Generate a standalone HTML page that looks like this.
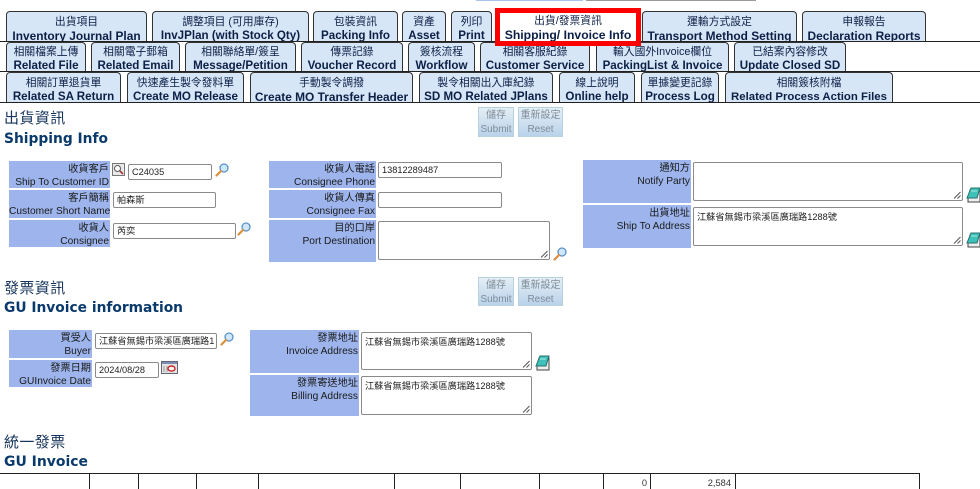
<!DOCTYPE html>
<html lang="zh-Hant"><head><meta charset="utf-8"><title>Shipping Info</title>
<style>
html,body{margin:0;padding:0;background:#fff;width:980px;height:489px;overflow:hidden}
body{position:relative;font-family:"Liberation Sans","Noto Sans CJK TC",sans-serif;color:#111;filter:blur(.3px)}
body>*{position:absolute;box-sizing:border-box}
.t{top:11px;height:31px;background:#d6e6f7;border:1px solid #333;border-bottom:0;border-radius:4px 4px 0 0;text-align:center;font-size:10.8px;line-height:14px;padding-top:3px;white-space:nowrap;color:#0c1f45;overflow:hidden}
.t b{display:block;font-size:11.6px;line-height:14px}
.r2{top:42px;height:30px;padding-top:2px}
.r3{top:72px;height:30px;padding-top:3px}
.hr{left:0;width:980px;height:1px;background:#222}
.l{background:#9db5ec;text-align:right;font-size:10.2px;line-height:13px;padding:2px 1px 0 0;color:#1a1a1a;white-space:nowrap}
.i{background:#fff;border:1px solid #8a8a8a;border-radius:2px;font-size:9.2px;line-height:15px;padding-left:3px;white-space:nowrap;overflow:hidden;color:#222}
.a{background:#fff;border:1px solid #8a8a8a;border-radius:2px;font-size:9.2px;line-height:14px;padding:2px 3px;white-space:nowrap;overflow:hidden;color:#222}
.a svg{position:absolute;right:1px;bottom:1px}
.b{background:linear-gradient(#e4eef5,#b9d2ea);border:1px solid #b9d0dd;color:#7f8c99;text-align:center;font-size:10px;line-height:14px;padding-top:1px;white-space:nowrap}
.h{left:4px;color:#16345c;font-size:15px;line-height:18px;letter-spacing:.4px;white-space:nowrap}
.e{left:0;overflow:visible}
.e text{fill:#0a3a6b;font-family:"DejaVu Sans",sans-serif;font-weight:bold;font-size:14.4px}
.v{top:473px;width:1px;height:16px;background:#222}
.n{top:477px;font-size:9.3px;line-height:13px;color:#333;text-align:right}
</style></head><body>
<svg width="0" height="0" style="position:absolute"><defs>
<symbol id="m" viewBox="0 0 14 14"><circle cx="9" cy="5" r="4" fill="#cfe6fb" stroke="#5b93c9" stroke-width="1.3"/><path d="M6 8 1.5 12.5" stroke="#dd8f3c" stroke-width="2.2" stroke-linecap="round"/></symbol>
<symbol id="k" viewBox="0 0 15 16"><path d="M4 3H14V15H2V12Z" fill="#eee" stroke="#444"/><path d="M5 1H14L11 11H1Z" fill="#3fc0b8" stroke="#27706e"/><path d="M5 4H11" stroke="#a8e8e4"/></symbol>
<symbol id="g" viewBox="0 0 8 8"><path d="M7.5 1 1 7.5M7.5 4.5 4.5 7.5" stroke="#555" fill="none"/></symbol>
</defs></svg>

<div style="left:476px;top:0;width:107px;height:1px;background:#a9c4ee"></div>
<div style="left:586px;top:0;width:170px;height:1px;background:#999"></div>

<div class="t" style="left:6px;width:141px">出貨項目<b style="font-size:11.9px">Inventory Journal Plan</b></div>
<div class="t" style="left:152px;width:157px">調整項目 (可用庫存)<b>InvJPlan (with Stock Qty)</b></div>
<div class="t" style="left:313px;width:85px">包裝資訊<b>Packing Info</b></div>
<div class="t" style="left:402px;width:44px">資產<b>Asset</b></div>
<div class="t" style="left:451px;width:41px">列印<b>Print</b></div>
<div class="t" style="left:642px;width:155px">運輸方式設定<b style="font-size:11.9px">Transport Method Setting</b></div>
<div class="t" style="left:802px;width:124px">申報報告<b style="font-size:11.9px">Declaration Reports</b></div>
<div class="hr" style="top:41px"></div>

<div class="t r2" style="left:6px;width:80px">相關檔案上傳<b>Related File</b></div>
<div class="t r2" style="left:91px;width:89px">相關電子郵箱<b>Related Email</b></div>
<div class="t r2" style="left:185px;width:111px">相關聯絡單/簽呈<b>Message/Petition</b></div>
<div class="t r2" style="left:301px;width:102px">傳票記錄<b>Voucher Record</b></div>
<div class="t r2" style="left:408px;width:67px">簽核流程<b>Workflow</b></div>
<div class="t r2" style="left:480px;width:110px">相關客服紀錄<b>Customer Service</b></div>
<div class="t r2" style="left:596px;width:133px">輸入國外Invoice欄位<b>PackingList &amp; Invoice</b></div>
<div class="t r2" style="left:734px;width:112px">已結案內容修改<b>Update Closed SD</b></div>
<div class="hr" style="top:71px"></div>

<div class="t r3" style="left:6px;width:115px">相關訂單退貨單<b>Related SA Return</b></div>
<div class="t r3" style="left:127px;width:117px">快速產生製令發料單<b>Create MO Release</b></div>
<div class="t r3" style="left:250px;width:163px">手動製令調撥<b style="font-size:11.9px">Create MO Transfer Header</b></div>
<div class="t r3" style="left:419px;width:134px">製令相關出入庫紀錄<b>SD MO Related JPlans</b></div>
<div class="t r3" style="left:559px;width:76px">線上說明<b>Online help</b></div>
<div class="t r3" style="left:641px;width:78px">單據變更記錄<b>Process Log</b></div>
<div class="t r3" style="left:725px;width:168px">相關簽核附檔<b style="font-size:11.4px">Related Process Action Files</b></div>
<div class="hr" style="top:102px"></div>

<div class="t" style="left:495px;top:8px;width:146px;height:38px;background:#fff;border:5px solid #f00;border-radius:0;padding-top:1px;z-index:2">出貨/發票資訊<b style="font-size:12.2px">Shipping/ Invoice Info</b></div>

<div class="h" style="top:110px">出貨資訊</div>
<svg class="e" style="top:124px" width="300" height="24"><text x="4" y="19" textLength="104" lengthAdjust="spacingAndGlyphs">Shipping Info</text></svg>
<div class="b" style="left:478px;top:107px;width:36px;height:30px">儲存<br>Submit</div>
<div class="b" style="left:518px;top:107px;width:45px;height:30px">重新設定<br>Reset</div>

<div class="l" style="left:9px;top:161px;width:101px;height:27px">收貨客戶<br>Ship To Customer ID</div>
<div class="l" style="left:9px;top:190px;width:101px;height:28px">客戶簡稱<br>Customer Short Name</div>
<div class="l" style="left:9px;top:220px;width:101px;height:27px">收貨人<br>Consignee</div>
<svg style="left:112px;top:163px" width="13" height="13" viewBox="0 0 13 13"><rect x=".5" y=".5" width="12" height="12" fill="#e8e8e8" stroke="#777"/><circle cx="5.5" cy="5.5" r="3" fill="#fff" stroke="#555"/><path d="M8 8l3 3" stroke="#a33" stroke-width="1.6"/></svg>
<div class="i" style="left:128px;top:164px;width:84px;height:16px">C24035</div>
<svg style="left:215px;top:163px" width="14" height="14"><use href="#m"/></svg>
<div class="i" style="left:113px;top:192px;width:103px;height:16px">帕森斯</div>
<div class="i" style="left:113px;top:223px;width:123px;height:16px">芮奕</div>
<svg style="left:237px;top:222px" width="14" height="14"><use href="#m"/></svg>

<div class="l" style="left:269px;top:161px;width:107px;height:27px">收貨人電話<br>Consignee Phone</div>
<div class="l" style="left:269px;top:190px;width:107px;height:28px">收貨人傳真<br>Consignee Fax</div>
<div class="l" style="left:269px;top:220px;width:107px;height:42px">目的口岸<br>Port Destination</div>
<div class="i" style="left:378px;top:162px;width:124px;height:16px">13812289487</div>
<div class="i" style="left:378px;top:192px;width:124px;height:16px"></div>
<div class="a" style="left:378px;top:221px;width:172px;height:39px"><svg width="8" height="8"><use href="#g"/></svg></div>
<svg style="left:553px;top:247px" width="14" height="14"><use href="#m"/></svg>

<div class="l" style="left:583px;top:160px;width:108px;height:43px">通知方<br>Notify Party</div>
<div class="l" style="left:583px;top:205px;width:108px;height:43px">出貨地址<br>Ship To Address</div>
<div class="a" style="left:693px;top:162px;width:270px;height:39px"><svg width="8" height="8"><use href="#g"/></svg></div>
<div class="a" style="left:693px;top:207px;width:270px;height:39px">江蘇省無錫市梁溪區廣瑞路1288號<svg width="8" height="8"><use href="#g"/></svg></div>
<svg style="left:966px;top:187px" width="15" height="16"><use href="#k"/></svg>
<svg style="left:966px;top:232px" width="15" height="16"><use href="#k"/></svg>

<div class="h" style="top:280px">發票資訊</div>
<svg class="e" style="top:293px" width="300" height="24"><text x="4" y="19" textLength="179" lengthAdjust="spacingAndGlyphs">GU Invoice information</text></svg>
<div class="b" style="left:478px;top:277px;width:36px;height:29px">儲存<br>Submit</div>
<div class="b" style="left:518px;top:277px;width:45px;height:29px">重新設定<br>Reset</div>

<div class="l" style="left:9px;top:330px;width:83px;height:28px">買受人<br>Buyer</div>
<div class="l" style="left:9px;top:360px;width:83px;height:27px">發票日期<br>GUInvoice Date</div>
<div class="i" style="left:95px;top:333px;width:122px;height:16px">江蘇省無錫市梁溪區廣瑞路1</div>
<svg style="left:220px;top:332px" width="14" height="14"><use href="#m"/></svg>
<div class="i" style="left:95px;top:362px;width:64px;height:16px">2024/08/28</div>
<svg style="left:161px;top:361px" width="17" height="13" viewBox="0 0 17 13"><rect x=".5" y=".5" width="16" height="12" fill="#e4e4e4" stroke="#667"/><rect x="1" y="1" width="15" height="2" fill="#7d8fb0"/><ellipse cx="10.5" cy="7.5" rx="3.5" ry="2.5" fill="#fff" stroke="#c22" stroke-width="1.4"/><path d="M3 5v6M6 5v6" stroke="#999"/></svg>

<div class="l" style="left:250px;top:330px;width:109px;height:43px">發票地址<br>Invoice Address</div>
<div class="l" style="left:250px;top:375px;width:109px;height:41px">發票寄送地址<br>Billing Address</div>
<div class="a" style="left:361px;top:332px;width:171px;height:38px">江蘇省無錫市梁溪區廣瑞路1288號<svg width="8" height="8"><use href="#g"/></svg></div>
<div class="a" style="left:361px;top:376px;width:171px;height:39px">江蘇省無錫市梁溪區廣瑞路1288號<svg width="8" height="8"><use href="#g"/></svg></div>
<svg style="left:535px;top:355px" width="15" height="16"><use href="#k"/></svg>

<div class="h" style="top:434px">統一發票</div>
<svg class="e" style="top:447px" width="300" height="24"><text x="4" y="19" textLength="84" lengthAdjust="spacingAndGlyphs">GU Invoice</text></svg>

<div style="left:0;top:473px;width:920px;height:1px;background:#222"></div>
<div class="v" style="left:89px"></div><div class="v" style="left:138px"></div><div class="v" style="left:196px"></div><div class="v" style="left:258px"></div><div class="v" style="left:394px"></div><div class="v" style="left:460px"></div><div class="v" style="left:539px"></div><div class="v" style="left:603px"></div><div class="v" style="left:650px"></div><div class="v" style="left:735px"></div><div class="v" style="left:919px"></div>
<div class="n" style="left:620px;width:27px">0</div>
<div class="n" style="left:690px;width:41px">2,584</div>
</body></html>
